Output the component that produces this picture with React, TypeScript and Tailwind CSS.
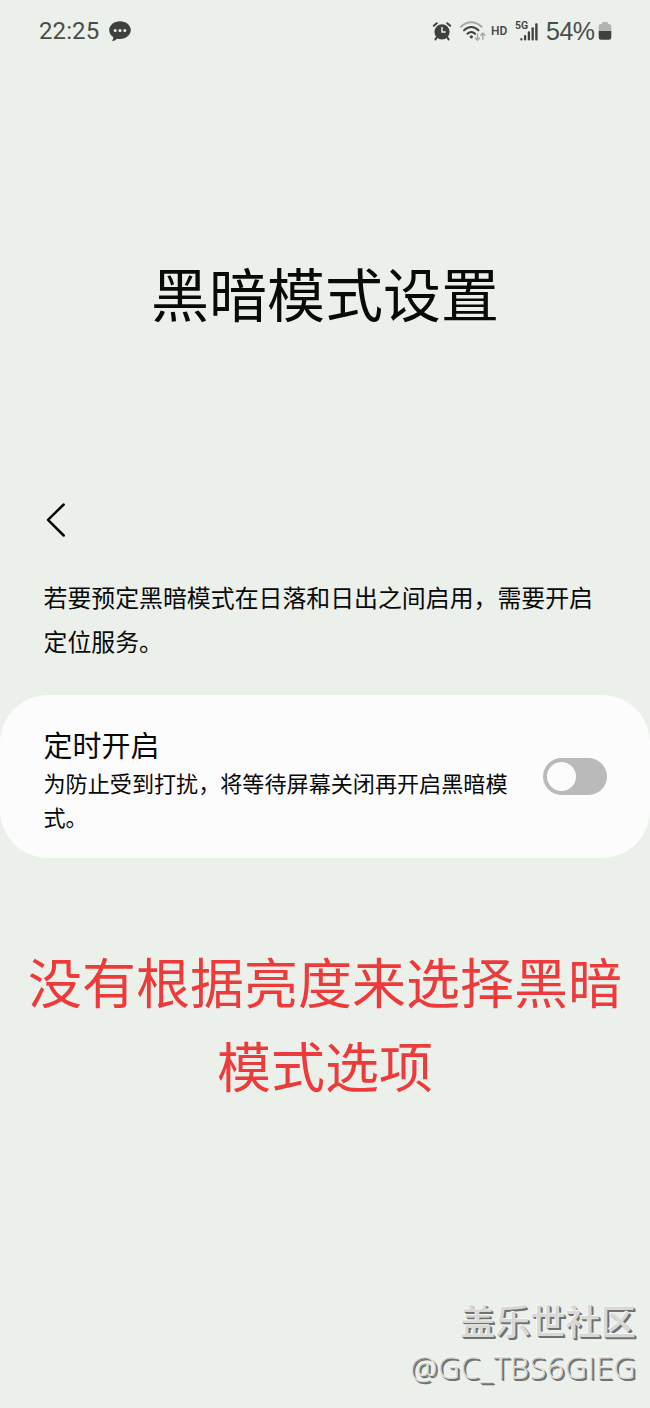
import React from 'react';

const AlarmIcon = () => (
  <svg width="20" height="20" viewBox="0 0 20 20" fill="none" stroke="#3d423f" strokeLinecap="round">
    <circle cx="10" cy="10.8" r="7.6" fill="#3d423f" stroke="none" />
    <path d="M1.8 4.8 4.8 2.2M18.2 4.8 15.2 2.2" strokeWidth="2" />
    <path d="M4.6 16.6 3.4 18.4M15.4 16.6 16.6 18.4" strokeWidth="2" />
    <path d="M10 6.5V11h3.2" stroke="#ebf0eb" strokeWidth="1.5" />
  </svg>
);

const WifiIcon = () => (
  <svg width="26" height="21" viewBox="0 0 26 21" fill="none" strokeLinecap="round">
    <path d="M1 5.8C7-.2 15.5-.2 21.5 5.8" stroke="#a3a8a4" strokeWidth="2" />
    <path d="M4 9.4C8.4 5 14.1 5 18.5 9.4" stroke="#3d423f" strokeWidth="2" />
    <path d="M7.4 12.8C9.8 10.4 12.7 10.4 15.1 12.8" stroke="#3d423f" strokeWidth="2" />
    <circle cx="11.3" cy="15.8" r="1.6" fill="#3d423f" />
    <path d="M17.5 13v6M15.5 17l2 2.2 2-2.2M22.8 18.5v-6M20.8 14.3l2-2.2 2 2.2" stroke="#a3a8a4" strokeWidth="1.4" />
  </svg>
);

const SignalIcon = () => (
  <svg width="24" height="24" viewBox="0 0 24 24" fill="#3d423f">
    <text x="0" y="9.5" fontSize="10.5" fontWeight="600" fontFamily="Roboto, sans-serif">5G</text>
    <rect x="5.3" y="19" width="2.2" height="2.6" rx="1" />
    <rect x="9" y="16" width="2.2" height="5.6" rx="1" />
    <rect x="12.8" y="12.3" width="2.2" height="9.3" rx="1" />
    <rect x="16.5" y="8.3" width="2.3" height="13.3" rx="1" />
    <rect x="20.2" y="4.3" width="2.4" height="17.3" rx="1" />
  </svg>
);

const BatteryIcon = () => (
  <svg width="14" height="20" viewBox="0 0 14 20">
    <path d="M4 2.2Q4 1 5.2 1h3.6Q10 1 10 2.2V3h1q2.3 0 2.3 2.3V10H.7V5.3Q.7 3 3 3h1z" fill="#b2b6b3" />
    <path d="M.7 10h12.6v6.5q0 2.3-2.3 2.3H3q-2.3 0-2.3-2.3z" fill="#3d423f" />
  </svg>
);

const ChatIcon = () => (
  <svg width="24" height="24" viewBox="0 0 24 24">
    <path d="M12 2.2c6 0 10.8 3.9 10.8 8.9S18 20 12 20q-1.5 0-2.9-.3-2.2 2.2-5 2.5 1.3-1.7 1.1-4.1C2.7 16.5 1.2 14 1.2 11.1 1.2 6.1 6 2.2 12 2.2z" fill="#3d423f" />
    <g fill="#ebf0eb">
      <circle cx="7.2" cy="11.5" r="1.5" />
      <circle cx="12" cy="11.5" r="1.5" />
      <circle cx="16.8" cy="11.5" r="1.5" />
    </g>
  </svg>
);

const StatusBar = () => (
  <header className="flex h-[62px] items-center justify-between pl-[39px] pr-[38px] font-[Roboto,sans-serif] text-[#484d49]">
    <div className="flex items-center gap-2">
      <span className="w-[61px] whitespace-nowrap text-[24px] leading-none tracking-[0.1px]">22:25</span>
      <ChatIcon />
    </div>
    <div className="flex items-center">
      <AlarmIcon />
      <div className="ml-2">
        <WifiIcon />
      </div>
      <span className="ml-[5px] w-[17px] text-[12px] font-semibold leading-none">HD</span>
      <div className="ml-[7px]">
        <SignalIcon />
      </div>
      <span className="ml-[7px] w-[52px] whitespace-nowrap font-['Liberation_Sans',sans-serif] text-[25px] leading-none tracking-[-0.5px]">54%</span>
      <BatteryIcon />
    </div>
  </header>
);

const App = () => {
  return (
    <div className="flex h-[1408px] w-[650px] flex-col overflow-hidden bg-[#ebf0eb] font-['Noto_Sans_CJK_SC',sans-serif] text-[#080908]">
      <StatusBar />
      <h1 className="mt-[190px] text-center text-[58px] leading-[80px]">黑暗模式设置</h1>

      <button className="ml-[45px] mt-[170px] h-[36px] w-[22px]" aria-label="返回">
        <svg width="22" height="36" viewBox="0 0 22 36" fill="none" stroke="#080908" strokeWidth="2.5" strokeLinecap="round" strokeLinejoin="round">
          <path d="M18.7 2.5 3 17.8l15.7 15.7" />
        </svg>
      </button>

      <p className="ml-[43.5px] mt-[37px] whitespace-nowrap text-[23.9px] leading-[44px]">
        若要预定黑暗模式在日落和日出之间启用，需要开启
        <br />
        定位服务。
      </p>

      <section className="mt-[32px] flex h-[163px] items-center rounded-[48px] bg-[#fcfcfc] pl-[43.5px] pr-[43px]">
        <div className="flex-1 pt-[2px]">
          <h2 className="text-[29px] leading-[42px]">定时开启</h2>
          <p className="whitespace-nowrap text-[22.1px] leading-[34px]">
            为防止受到打扰，将等待屏幕关闭再开启黑暗模
            <br />
            式。
          </p>
        </div>
        <div className="flex h-[37px] w-[64px] items-center rounded-full bg-[#bababa] pl-[4px]" role="switch" aria-checked="false">
          <div className="h-[29px] w-[29px] rounded-full bg-[#fcfcfc]" />
        </div>
      </section>

      <p className="mt-[81px] text-center text-[54px] leading-[84px] text-[#ed3a3a]">
        没有根据亮度来选择黑暗
        <br />
        模式选项
      </p>

      <footer className="mb-[19px] mr-[14px] mt-auto flex flex-col items-end whitespace-nowrap text-[#d8d9d7] [text-shadow:-1px_-1px_0_#f8f7f3,1px_1px_0_#6f726f,2px_2px_0_#6f726f]">
        <span className="text-[35.2px] font-medium leading-[46px]">盖乐世社区</span>
        <span className="mt-[2px] font-['Open_Sans',sans-serif] text-[31px] font-light leading-[44px] tracking-[0.35px]">@GC_TBS6GIEG</span>
      </footer>
    </div>
  );
};

export default App;
